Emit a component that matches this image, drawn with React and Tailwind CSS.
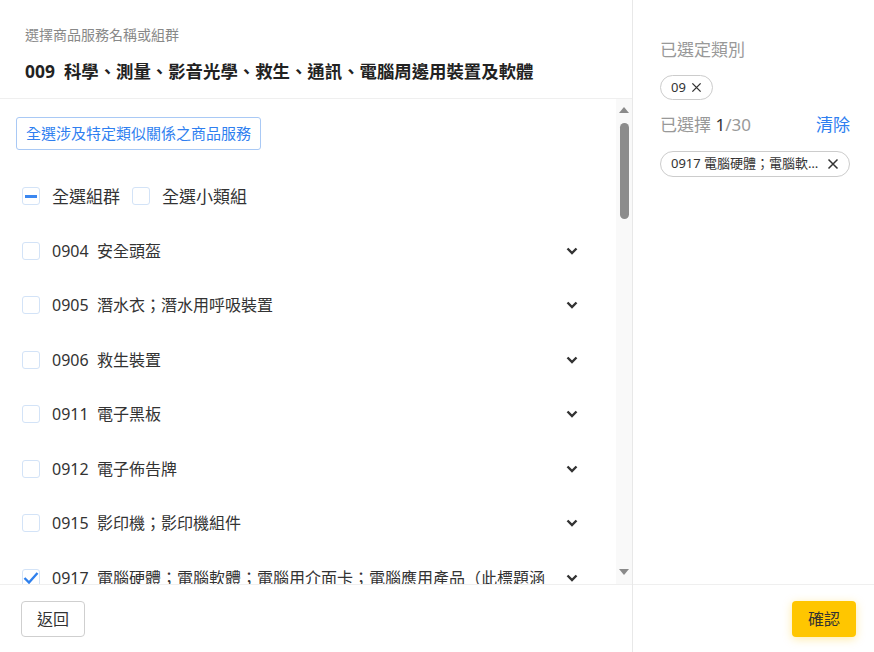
import React from "react";

const groups = [
  { code: "0904", name: "安全頭盔" },
  { code: "0905", name: "潛水衣；潛水用呼吸裝置" },
  { code: "0906", name: "救生裝置" },
  { code: "0911", name: "電子黑板" },
  { code: "0912", name: "電子佈告牌" },
  { code: "0915", name: "影印機；影印機組件" },
  { code: "0917", name: "電腦硬體；電腦軟體；電腦用介面卡；電腦應用產品（此標題涵", checked: true },
];

function Chevron() {
  return (
    <svg width="12" height="8" viewBox="0 0 12 8" className="shrink-0">
      <polyline points="1.5,1.5 6,6 10.5,1.5" fill="none" stroke="#333" strokeWidth="2.4" />
    </svg>
  );
}

function XIcon({ size = 12 }) {
  return (
    <svg width={size} height={size} viewBox="0 0 12 12" className="shrink-0">
      <path d="M1.5 1.5 L10.5 10.5 M10.5 1.5 L1.5 10.5" stroke="#333" strokeWidth="1.5" />
    </svg>
  );
}

function Box({ state }) {
  return (
    <div className="w-[18px] h-[18px] shrink-0 rounded-[3px] border border-[#d3e3f7] bg-white flex items-center justify-center">
      {state === "half" && <div className="w-[12px] h-[3px] bg-[#3b87f0]" />}
      {state === "checked" && (
        <svg width="16" height="14" viewBox="0 0 16 14">
          <path d="M1.5 7 L6 11.5 L14.5 2" fill="none" stroke="#2f80ed" strokeWidth="2.4" />
        </svg>
      )}
    </div>
  );
}

export default function App() {
  return (
    <div
      className="w-[874px] h-[652px] flex bg-white text-[#333] overflow-hidden"
      style={{ fontFamily: "'Noto Sans', 'Noto Sans CJK TC', sans-serif" }}
    >
      {/* Left panel */}
      <div className="w-[633px] flex flex-col border-r border-[#e8e8e8]">
        <div className="h-[99px] shrink-0 border-b border-[#efefef] pl-[25px] pt-[24px]">
          <p className="text-[14px] leading-[22px] text-[#888]">選擇商品服務名稱或組群</p>
          <h1 className="mt-[12px] text-[17.4px] leading-[26px] font-bold text-[#222] whitespace-pre">
            009  科學、測量、影音光學、救生、通訊、電腦周邊用裝置及軟體
          </h1>
        </div>

        <div className="flex-1 flex min-h-0">
          <div className="flex-1 overflow-hidden pl-4 pt-[18px]">
            <button className="h-[33px] px-[9px] rounded-[3px] border border-[#a9c9f5] text-[15px] text-[#2f7ff0] leading-none">
              全選涉及特定類似關係之商品服務
            </button>
            <div className="mt-[19px] pl-[6px] pr-[38px]">
              <div className="h-[54.5px] flex items-center text-[17px]">
                <Box state="half" />
                <span className="ml-[12px]">全選組群</span>
                <div className="ml-[12px]"><Box /></div>
                <span className="ml-[12px]">全選小類組</span>
              </div>
              {groups.map((g) => (
                <div key={g.code} className="h-[54.5px] flex items-center text-[16px]">
                  <Box state={g.checked ? "checked" : undefined} />
                  <span className="ml-[12px] whitespace-pre flex-1 overflow-hidden">
                    {g.code}  {g.name}
                  </span>
                  <Chevron />
                </div>
              ))}
            </div>
          </div>
          {/* scrollbar */}
          <div className="w-[16px] shrink-0 bg-[#f9f9f9] flex flex-col items-center">
            <div className="mt-[8px] w-0 h-0 border-l-[5px] border-r-[5px] border-b-[6px] border-l-transparent border-r-transparent border-b-[#8a8a8a]" />
            <div className="mt-[10px] w-[9px] h-[96px] rounded-full bg-[#8c8c8c]" />
            <div className="flex-1" />
            <div className="mb-[9px] w-0 h-0 border-l-[5px] border-r-[5px] border-t-[6px] border-l-transparent border-r-transparent border-t-[#8a8a8a]" />
          </div>
        </div>

        <div className="h-[68px] shrink-0 border-t border-[#efefef] flex items-center pl-[21px]">
          <button className="w-[64px] h-[36px] rounded-[4px] border border-[#cfcfcf] text-[16px] text-[#333]">
            返回
          </button>
        </div>
      </div>

      {/* Right panel */}
      <div className="flex-1 flex flex-col">
        <div className="flex-1 pl-[27px] pr-[24px] pt-[38px]">
          <p className="text-[17px] leading-[24px] text-[#999]">已選定類別</p>
          <div className="mt-[13px] inline-flex items-center gap-[5px] h-[25px] px-[10px] rounded-full border border-[#cccccc] text-[13px] text-[#333]">
            09 <XIcon size={11} />
          </div>
          <div className="mt-[13px] flex items-center justify-between text-[17px] leading-[24px]">
            <p className="text-[#999]">
              已選擇 <span className="text-[#333]">1</span>/30
            </p>
            <span className="text-[#2f7ff0]">清除</span>
          </div>
          <div className="mt-[14px] inline-flex items-center gap-[9px] h-[26px] w-[190px] pl-[10px] pr-[10px] rounded-full border border-[#cccccc] text-[13px] text-[#333] whitespace-nowrap">
            <span className="flex-1 overflow-hidden">0917 電腦硬體；電腦軟…</span>
            <XIcon size={12} />
          </div>
        </div>
        <div className="h-[68px] shrink-0 border-t border-[#efefef] flex items-center justify-end pr-[18px]">
          <button className="w-[64px] h-[36px] rounded-[4px] bg-[#ffc600] text-[16px] text-[#333] shadow-[0_2px_10px_rgba(255,198,0,0.35)]">
            確認
          </button>
        </div>
      </div>
    </div>
  );
}
